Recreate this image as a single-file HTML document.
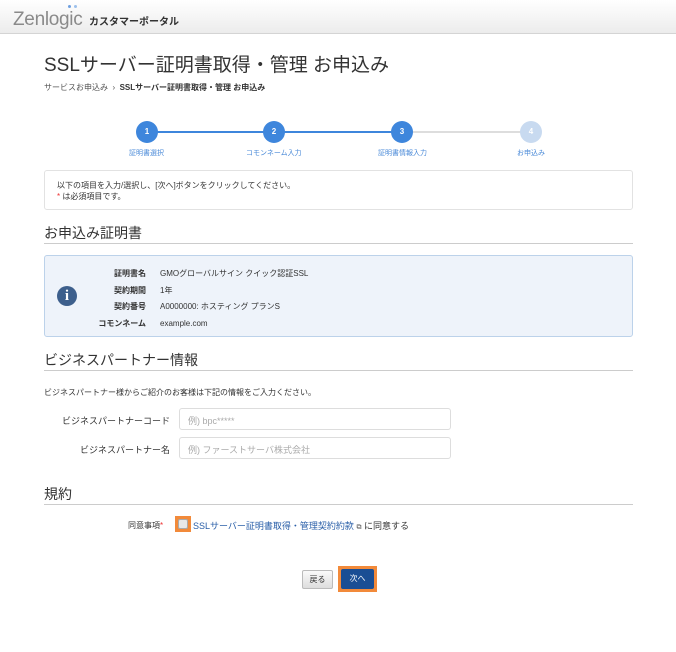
<!DOCTYPE html>
<html><head><meta charset="utf-8"><style>
*{box-sizing:border-box;margin:0;padding:0}
body{width:676px;height:652px;background:#fff;font-family:"Liberation Sans","Noto Sans CJK JP",sans-serif;color:#333;position:relative;overflow:hidden}
.abs{position:absolute;white-space:nowrap}
.hdr{position:absolute;left:0;top:0;width:676px;height:34px;background:linear-gradient(#fff,#ececec);border-bottom:1px solid #d4d4d4}
.circ{position:absolute;width:22px;height:22px;border-radius:50%;color:#fff;font-size:8px;font-weight:bold;text-align:center;line-height:22px}
.lbl{position:absolute;font-size:7px;color:#4a8ad8;white-space:nowrap}
.h2{position:absolute;left:44px;font-size:14px;color:#333}
.rule{position:absolute;left:44px;width:589px;height:1px;background:#ccc}
.inp{position:absolute;left:179px;width:272px;height:22px;border:1px solid #ddd;border-radius:3px;font-size:9px;color:#aaa;padding:5px 8px}
.fl{position:absolute;font-size:9px;color:#333;text-align:right;width:130px;left:40px}
</style></head><body>
<div class="hdr">
<div class="abs" style="left:13px;top:9px;font-size:19px;color:#8a8a8a;letter-spacing:-0.3px">Zenlogic</div>
<div class="abs" style="left:68px;top:5px;width:3px;height:3px;border-radius:50%;background:#6fa0e0"></div>
<div class="abs" style="left:74px;top:5px;width:3px;height:3px;border-radius:50%;background:#9cc0ec"></div>
<div class="abs" style="left:89px;top:13px;font-size:10px;font-weight:bold;color:#333">カスタマーポータル</div>
</div>
<div class="abs" style="left:44px;top:50px;font-size:19px;color:#333">SSLサーバー証明書取得・管理 お申込み</div>
<div class="abs" style="left:44px;top:82px;font-size:8px;color:#555">サービスお申込み &nbsp;›&nbsp; <b style="color:#333">SSLサーバー証明書取得・管理 お申込み</b></div>

<div class="abs" style="left:147px;top:131px;width:254px;height:2px;background:#3e86dc"></div>
<div class="abs" style="left:401px;top:131px;width:131px;height:2px;background:#ddd"></div>
<div class="circ" style="left:136px;top:121px;background:#3e86dc">1</div>
<div class="circ" style="left:263px;top:121px;background:#3e86dc">2</div>
<div class="circ" style="left:391px;top:121px;background:#3e86dc">3</div>
<div class="circ" style="left:520px;top:121px;background:#c8daf0">4</div>
<div class="lbl" style="left:129px;top:148px">証明書選択</div>
<div class="lbl" style="left:246px;top:148px">コモンネーム入力</div>
<div class="lbl" style="left:378px;top:148px">証明書情報入力</div>
<div class="lbl" style="left:517px;top:148px">お申込み</div>

<div class="abs" style="left:44px;top:170px;width:589px;height:40px;border:1px solid #e2e2e2;border-radius:3px"></div>
<div class="abs" style="left:57px;top:180px;font-size:8px;color:#333">以下の項目を入力/選択し、[次へ]ボタンをクリックしてください。</div>
<div class="abs" style="left:57px;top:191px;font-size:8px;color:#333"><span style="color:#e33">*</span> は必須項目です。</div>

<div class="h2" style="top:223px">お申込み証明書</div>
<div class="rule" style="top:243px"></div>
<div class="abs" style="left:44px;top:255px;width:589px;height:82px;background:#eef3fa;border:1px solid #bcd2ea;border-radius:3px"></div>
<div class="abs" style="left:57px;top:286px;width:20px;height:20px;border-radius:50%;background:#3d5f8c;color:#fff;font-weight:bold;font-family:'Liberation Serif',serif;font-size:15px;text-align:center;line-height:20px">i</div>
<div class="abs" style="left:80px;top:266px;width:66px;text-align:right;font-size:8px;font-weight:bold;line-height:16.7px;color:#333">証明書名<br>契約期間<br>契約番号<br>コモンネーム</div>
<div class="abs" style="left:160px;top:266px;font-size:8px;line-height:16.7px;color:#333">GMOグローバルサイン クイック認証SSL<br>1年<br>A0000000: ホスティング プランS<br>example.com</div>

<div class="h2" style="top:350px">ビジネスパートナー情報</div>
<div class="rule" style="top:370px"></div>
<div class="abs" style="left:44px;top:387px;font-size:8px">ビジネスパートナー様からご紹介のお客様は下記の情報をご入力ください。</div>
<div class="fl" style="top:414px">ビジネスパートナーコード</div>
<div class="inp" style="top:408px">例) bpc*****</div>
<div class="fl" style="top:443px">ビジネスパートナー名</div>
<div class="inp" style="top:437px">例) ファーストサーバ株式会社</div>

<div class="h2" style="top:484px">規約</div>
<div class="rule" style="top:504px"></div>
<div class="abs" style="left:128px;top:520px;font-size:8px">同意事項<span style="color:#e33">*</span></div>
<div class="abs" style="left:175px;top:516px;width:16px;height:16px;background:#f28a3a;padding:3px"><div style="width:10px;height:10px;background:#e8e8e8;border:1px solid #aaa;border-radius:2px"></div></div>
<div class="abs" style="left:193px;top:519px;font-size:9px;color:#2a5fa8">SSLサーバー証明書取得・管理契約約款 <span style="color:#555;font-size:7px">⧉</span> <span style="color:#333">に同意する</span></div>

<div class="abs" style="left:302px;top:570px;width:31px;height:19px;border:1px solid #bbb;border-radius:2px;background:linear-gradient(#fafafa,#ddd);font-size:8px;text-align:center;line-height:17px">戻る</div>
<div class="abs" style="left:338px;top:566px;width:39px;height:26px;background:#f28a3a;padding:3px"><div style="width:33px;height:20px;background:#1a4e94;border-radius:2px;color:#fff;font-size:8px;text-align:center;line-height:20px">次へ</div></div>
</body></html>
